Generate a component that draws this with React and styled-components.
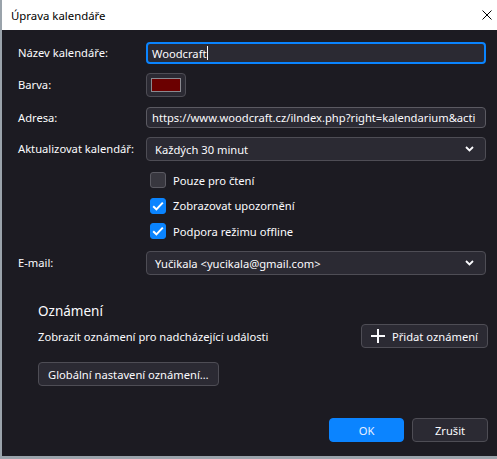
import React from "react";
import styled, { createGlobalStyle } from "styled-components";

const GlobalStyle = createGlobalStyle`
  html, body {
    margin: 0;
    padding: 0;
    background: #9aa3ab;
  }
  body {
    font-family: "Noto Sans", "Open Sans", sans-serif;
    font-size: 11.2px;
  }
`;

const Window = styled.div`
  width: 495px;
  height: 456px;
  margin-left: 2px;
  display: flex;
  flex-direction: column;
  background: #1c1b22;
  color: #fbfbfe;
`;

const TitleBar = styled.div`
  height: 30px;
  flex: none;
  background: #ffffff;
  color: #000;
  display: flex;
  align-items: center;
  justify-content: space-between;
  padding: 0 5px 0 9px;
  font-size: 11.4px;
`;

const Close = styled.svg`
  width: 10px;
  height: 10px;
`;

const Body = styled.div`
  flex: 1;
  display: flex;
  flex-direction: column;
  padding: 12px 11px 14px 16px;
`;

const Row = styled.div`
  display: grid;
  grid-template-columns: 128px 340px;
  align-items: center;
  margin-top: ${(p) => p.$mt || 0}px;
`;

const Label = styled.div`
  line-height: 16px;
`;

const TextInput = styled.div`
  box-sizing: border-box;
  height: ${(p) => (p.$focused ? 22 : 21)}px;
  border: ${(p) => (p.$focused ? "2px solid #0a84ff" : "1px solid #5b5a62")};
  border-radius: 4px;
  background: #2b2a33;
  display: flex;
  align-items: center;
  padding-left: ${(p) => (p.$focused ? 4 : 5)}px;
  white-space: nowrap;
  overflow: hidden;
`;

const Caret = styled.span`
  display: inline-block;
  width: 1px;
  height: 14px;
  background: #fbfbfe;
`;

const ColorButton = styled.div`
  box-sizing: border-box;
  width: 40px;
  height: 24px;
  border: 1px solid #4e4d55;
  border-radius: 4px;
  background: #2b2a33;
  padding: 4px;
`;

const Swatch = styled.div`
  height: 100%;
  background: ${(p) => p.$color};
  border: 1px solid #8a8a90;
  box-sizing: border-box;
`;

const Select = styled.div`
  box-sizing: border-box;
  height: 24px;
  border: 1px solid #4e4d55;
  border-radius: 4px;
  background: #2b2a33;
  display: flex;
  align-items: center;
  justify-content: space-between;
  padding: 0 11px 0 8px;
`;

const Chevron = styled.svg`
  width: 9px;
  height: 6px;
`;

const Checks = styled.div`
  grid-column: 2;
  display: flex;
  flex-direction: column;
  gap: 9.5px;
  padding-left: 4px;
`;

const Check = styled.div`
  display: flex;
  align-items: center;
  gap: 7px;
  height: 16px;
`;

const Box = styled.div`
  box-sizing: border-box;
  width: 16px;
  height: 16px;
  border-radius: 3px;
  background: ${(p) => (p.$on ? "#0a84ff" : "#38373f")};
  border: 1px solid ${(p) => (p.$on ? "#0a84ff" : "#5b5a62")};
  display: flex;
  align-items: center;
  justify-content: center;
`;

const Section = styled.div`
  margin: 26px -2px 0 20px;
  display: flex;
  flex-direction: column;
`;

const Heading = styled.div`
  font-size: 13.5px;
  line-height: 20px;
`;

const NotifyRow = styled.div`
  display: flex;
  align-items: center;
  justify-content: space-between;
  margin-top: 3px;
`;

const Button = styled.button`
  box-sizing: border-box;
  height: 24px;
  font: inherit;
  color: ${(p) => (p.$primary ? "#e6f0ff" : "#fbfbfe")};
  background: ${(p) => (p.$primary ? "#0b84ff" : "#2b2a33")};
  border: 1px solid ${(p) => (p.$primary ? "#0b84ff" : "#4e4d55")};
  border-radius: 4px;
  padding: 0 ${(p) => (p.$wide ? 0 : 9)}px;
  width: ${(p) => (p.$wide ? `${p.$wide}px` : "auto")};
  display: inline-flex;
  align-items: center;
  justify-content: center;
  gap: 7px;
  align-self: flex-start;
`;

const GlobalButton = styled(Button)`
  margin-top: 14px;
`;

const Footer = styled.div`
  margin-top: auto;
  margin-right: -2px;
  display: flex;
  justify-content: flex-end;
  gap: 8px;
`;

const Down = () => (
  <Chevron viewBox="0 0 9 6">
    <path d="M1 1l3.5 3.5L8 1" fill="none" stroke="#fbfbfe" strokeWidth="1.8" />
  </Chevron>
);

const Tick = () => (
  <svg width="12" height="10" viewBox="0 0 12 10">
    <path d="M1.2 5.2l3.2 3.2L10.8 1.6" fill="none" stroke="#fff" strokeWidth="2" />
  </svg>
);

const App = () => (
  <>
    <GlobalStyle />
    <Window>
      <TitleBar>
        <span>Úprava kalendáře</span>
        <Close viewBox="0 0 10 10">
          <path d="M0.5 0.5l9 9M9.5 0.5l-9 9" stroke="#000" strokeWidth="1" />
        </Close>
      </TitleBar>
      <Body>
        <Row>
          <Label>Název kalendáře:</Label>
          <TextInput $focused>
            Woodcraft
            <Caret />
          </TextInput>
        </Row>
        <Row $mt={9}>
          <Label>Barva:</Label>
          <ColorButton>
            <Swatch $color="#6b0000" />
          </ColorButton>
        </Row>
        <Row $mt={10}>
          <Label>Adresa:</Label>
          <TextInput>https://www.woodcraft.cz/ilndex.php?right=kalendarium&amp;acti</TextInput>
        </Row>
        <Row $mt={9}>
          <Label>Aktualizovat kalendář:</Label>
          <Select>
            Každých 30 minut
            <Down />
          </Select>
        </Row>
        <Row $mt={11}>
          <Checks>
            <Check>
              <Box />
              Pouze pro čtení
            </Check>
            <Check>
              <Box $on>
                <Tick />
              </Box>
              Zobrazovat upozornění
            </Check>
            <Check>
              <Box $on>
                <Tick />
              </Box>
              Podpora režimu offline
            </Check>
          </Checks>
        </Row>
        <Row $mt={12}>
          <Label>E-mail:</Label>
          <Select>
            Yučikala &lt;yucikala@gmail.com&gt;
            <Down />
          </Select>
        </Row>
        <Section>
          <Heading>Oznámení</Heading>
          <NotifyRow>
            <span>Zobrazit oznámení pro nadcházející události</span>
            <Button>
              <svg width="14" height="14" viewBox="0 0 14 14">
                <path d="M7 0v14M0 7h14" stroke="#fbfbfe" strokeWidth="2" />
              </svg>
              Přidat oznámení
            </Button>
          </NotifyRow>
          <GlobalButton>Globální nastavení oznámení…</GlobalButton>
        </Section>
        <Footer>
          <Button $primary $wide={75}>OK</Button>
          <Button $wide={76}>Zrušit</Button>
        </Footer>
      </Body>
    </Window>
  </>
);

export default App;
